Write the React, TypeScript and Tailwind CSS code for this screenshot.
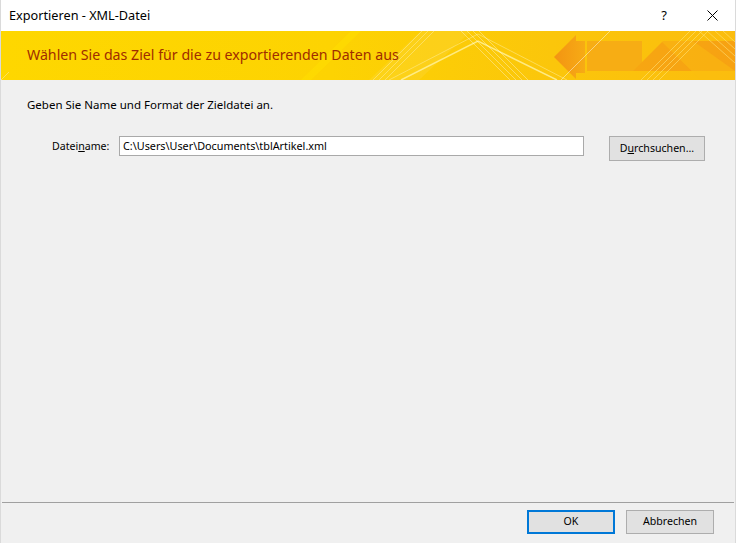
import React from "react";

function Banner() {
  return (
    <svg width="734" height="49" viewBox="0 0 734 49" className="absolute inset-0">
      <defs>
        <linearGradient id="bg" x1="0" y1="0" x2="1" y2="0">
          <stop offset="0" stopColor="#fed700" />
          <stop offset="0.45" stopColor="#fdd302" />
          <stop offset="0.75" stopColor="#fbc60b" />
          <stop offset="1" stopColor="#fbbd0d" />
        </linearGradient>
        <linearGradient id="arrow" x1="0" y1="0" x2="1" y2="0">
          <stop offset="0" stopColor="#f39412" />
          <stop offset="1" stopColor="#f7ab15" />
        </linearGradient>
        <linearGradient id="right" x1="0" y1="0" x2="1" y2="0">
          <stop offset="0" stopColor="#f7a612" />
          <stop offset="1" stopColor="#f7a212" />
        </linearGradient>
      </defs>
      <rect width="734" height="49" fill="url(#bg)" />
      <polygon points="368,49 420,0 470,0 418,49" fill="#ffffff" opacity="0.08" />
      <polygon points="300,49 350,0 360,0 310,49" fill="#ffe000" opacity="0.5" />
      <polyline points="400,49 477,10 556,49" fill="none" stroke="#fff3a0" strokeWidth="1.5" opacity="0.8" />
      <polyline points="388,49 477,3 566,49" fill="none" stroke="#fff0a0" strokeWidth="1" opacity="0.5" />
      <line x1="460" y1="0" x2="509" y2="49" stroke="#ffffff" strokeWidth="1" opacity="0.35" />
      <line x1="466" y1="0" x2="515" y2="49" stroke="#ffffff" strokeWidth="1" opacity="0.35" />
      <line x1="472" y1="0" x2="521" y2="49" stroke="#ffffff" strokeWidth="1" opacity="0.35" />
      <line x1="478" y1="0" x2="527" y2="49" stroke="#ffffff" strokeWidth="1" opacity="0.35" />
      <line x1="372" y1="49" x2="421" y2="0" stroke="#ffffff" strokeWidth="1" opacity="0.3" />
      <line x1="378" y1="49" x2="427" y2="0" stroke="#ffffff" strokeWidth="1" opacity="0.3" />
      <line x1="384" y1="49" x2="433" y2="0" stroke="#ffffff" strokeWidth="1" opacity="0.3" />
      <polygon points="553,26 575,4 575,10 584,10 584,42 575,42 575,48" fill="url(#arrow)" />
      <rect x="586" y="10" width="55" height="30" fill="#f7ad14" />
      <polygon points="632,40 662,10 734,10 734,40" fill="url(#right)" />
      <polygon points="660,10 692,10 734,40 734,49 700,49" fill="#fbbd0f" opacity="0.5" />
      <line x1="560" y1="49" x2="609" y2="0" stroke="#ffffff" strokeWidth="1" opacity="0.45" />
      <line x1="640" y1="49" x2="689" y2="0" stroke="#ffe680" strokeWidth="1" opacity="0.55" />
      <line x1="646" y1="49" x2="695" y2="0" stroke="#ffe680" strokeWidth="1" opacity="0.55" />
      <line x1="652" y1="49" x2="701" y2="0" stroke="#ffe680" strokeWidth="1" opacity="0.55" />
      <line x1="658" y1="49" x2="707" y2="0" stroke="#ffe680" strokeWidth="1" opacity="0.55" />
      <line x1="698" y1="0" x2="734" y2="32" stroke="#ffe680" strokeWidth="1" opacity="0.55" />
      <line x1="706" y1="0" x2="734" y2="25" stroke="#ffe680" strokeWidth="1" opacity="0.55" />
      <line x1="714" y1="0" x2="734" y2="18" stroke="#ffe680" strokeWidth="1" opacity="0.55" />
      <line x1="722" y1="0" x2="734" y2="11" stroke="#ffe680" strokeWidth="1" opacity="0.55" />
      <line x1="0" y1="49" x2="8" y2="41" stroke="#ffe680" strokeWidth="1" opacity="0.7" />
    </svg>
  );
}

export default function App() {
  const font = { fontFamily: '"Noto Sans", "Open Sans", sans-serif' } as React.CSSProperties;
  return (
    <div
      className="w-[736px] h-[543px] flex flex-col bg-[#f0f0f0] border-x border-[#dadada] text-[11px] text-black overflow-hidden"
      style={font}
    >
      <div className="h-[31px] bg-white flex items-center shrink-0">
        <span className="pl-[8px] text-[12.7px] leading-none">Exportieren - XML-Datei</span>
        <span className="ml-auto mr-[40px] text-[13px] leading-none">?</span>
        <svg width="11" height="11" viewBox="0 0 11 11" className="mr-[17px]">
          <path d="M0.5 0.5 L10.5 10.5 M10.5 0.5 L0.5 10.5" stroke="#000" strokeWidth="1" />
        </svg>
      </div>
      <div className="relative h-[49px] shrink-0">
        <Banner />
        <div className="relative h-full flex items-center pl-[26px] pb-px text-[14.2px] text-[#a02c00]">
          Wählen Sie das Ziel für die zu exportierenden Daten aus
        </div>
      </div>
      <div className="flex-1 flex flex-col">
        <div className="pl-[26px] pt-[16px] leading-[18px] text-[11.5px]">Geben Sie Name und Format der Zieldatei an.</div>
        <div className="flex items-center mt-[17px]">
          <div className="w-[118px] pl-[51px] leading-[18px] text-[10.6px]">
            Datei<span className="underline">n</span>ame:
          </div>
          <div className="w-[465px] h-[20px] bg-white border border-[#a9a9a9] flex items-center pl-[3px] text-[10.8px]">
            C:\Users\User\Documents\tblArtikel.xml
          </div>
          <button className="ml-[25px] mt-[5px] w-[96px] h-[25px] bg-[#e1e1e1] border border-[#adadad] flex items-center justify-center text-[10.6px]">
            D<span className="underline">u</span>rchsuchen...
          </button>
        </div>
      </div>
      <div className="h-px bg-[#a0a0a0] mx-px shrink-0" />
      <div className="h-[40px] flex items-start justify-end shrink-0 pt-[7px] pr-[21px] gap-[11px] text-[10.6px]">
        <button className="w-[88px] h-[24px] bg-[#e1e1e1] border-2 border-[#0078d7] flex items-center justify-center">
          OK
        </button>
        <button className="w-[88px] h-[24px] bg-[#e1e1e1] border border-[#adadad] flex items-center justify-center">
          Abbrechen
        </button>
      </div>
    </div>
  );
}
